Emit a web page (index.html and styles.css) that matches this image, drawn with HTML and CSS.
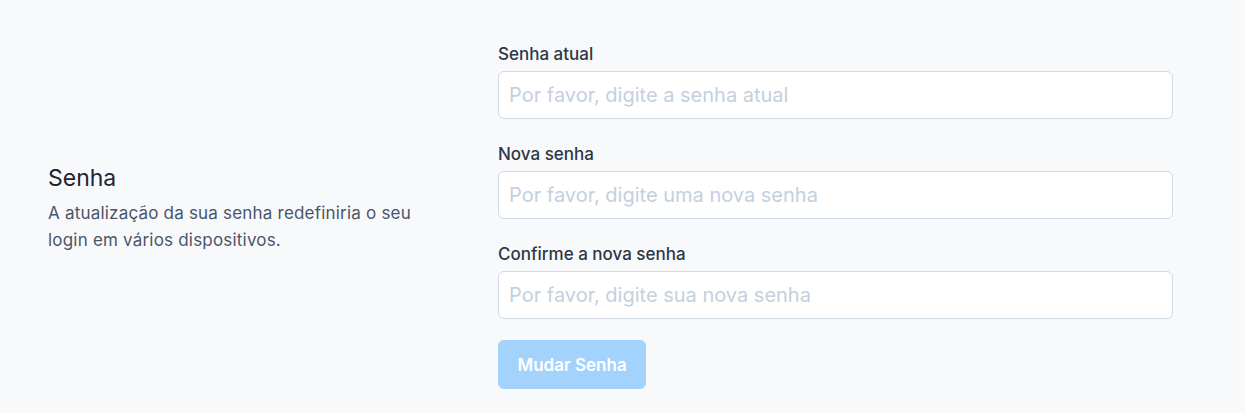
FILE: index.html
```html
<!DOCTYPE html>
<html lang="pt">
<head>
    <meta charset="UTF-8">
    <meta name="viewport" content="width=device-width, initial-scale=1.0">
    <title>Senha</title>
    <link rel="stylesheet" href="styles.css">
</head>
<body>
    <div class="section">
        <div class="info">
            <h2>Senha</h2>
            <p>A atualização da sua senha redefiniria o seu login em vários dispositivos.</p>
        </div>

        <form class="form">
            <div class="field">
                <label>Senha atual</label>
                <input type="password" placeholder="Por favor, digite a senha atual">
            </div>
            <div class="field">
                <label>Nova senha</label>
                <input type="password" placeholder="Por favor, digite uma nova senha">
            </div>
            <div class="field">
                <label>Confirme a nova senha</label>
                <input type="password" placeholder="Por favor, digite sua nova senha">
            </div>
            <div class="actions">
                <button type="button" class="btn" disabled>Mudar Senha</button>
            </div>
        </form>
    </div>
</body>
</html>
```

FILE: styles.css
```css
body{
    margin: 0;
    background-color: #f8f9fb;
    font-family: Inter, "Noto Sans", sans-serif;
    color: #2d3748;
}

.section{
    display: grid;
    grid-template-columns: 400px 675px;
    column-gap: 50px;
    align-items: center;
    padding: 42px 48px 23px 48px;
}

.info{
    padding-bottom: 14px;
}

.info h2{
    margin: 0 0 7px 0;
    font-size: 23px;
    line-height: 30px;
    font-weight: 400;
    color: #1e2433;
}

.info p{
    margin: 0;
    font-size: 17px;
    line-height: 27px;
    letter-spacing: 0.2px;
    color: #4a5568;
}

.form{
    display: flex;
    flex-direction: column;
    gap: 23px;
}

.field{
    display: flex;
    flex-direction: column;
    gap: 5px;
}

.field label{
    font-size: 17px;
    line-height: 24px;
    font-weight: 500;
    color: #2d3748;
}

.field input{
    box-sizing: border-box;
    height: 48px;
    padding: 0 10px;
    border: 1px solid #cfdae5;
    border-radius: 6px;
    background-color: white;
    font-family: inherit;
    font-size: 20px;
    color: #2d3748;
}

.field input::placeholder{
    color: #c3d0de;
}

.actions{
    margin-top: -2px;
}

.btn{
    height: 49px;
    padding: 0 19.5px;
    border: none;
    border-radius: 6px;
    background-color: #a3d2fd;
    color: white;
    font-family: inherit;
    font-size: 17px;
    font-weight: 600;
}
```
